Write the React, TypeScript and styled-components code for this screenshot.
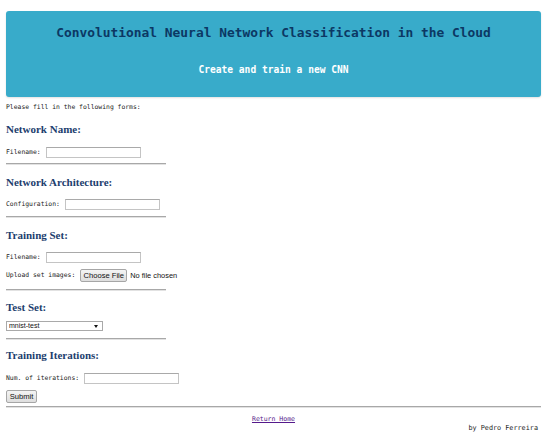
import React from "react";
import styled, { createGlobalStyle } from "styled-components";

const Global = createGlobalStyle`
  html, body { margin: 0; padding: 0; background: #fff; }
  body { padding: 0 9px 0 6px; font-family: "DejaVu Sans Mono", monospace; color: #222; }
`;

const Header = styled.header`
  margin-top: 11px;
  height: 86px;
  box-sizing: border-box;
  padding-top: 14px;
  background: #38abca;
  border-radius: 3px;
  box-shadow: 0 1px 2px rgba(0, 0, 0, 0.12);
  text-align: center;
`;

const Title = styled.h1`
  margin: 0;
  font-family: "DejaVu Sans Mono", monospace;
  font-size: 12.9px;
  line-height: 16px;
  font-weight: bold;
  color: #0c3864;
`;

const Subtitle = styled.h2`
  margin: 23px 0 0;
  font-family: "DejaVu Sans Mono", monospace;
  font-size: 9.6px;
  line-height: 12px;
  font-weight: bold;
  color: #fff;
`;

const Small = styled.p<{ $mt: number }>`
  margin: ${(p) => p.$mt}px 0 0;
  font-size: 6.4px;
  line-height: 10px;
`;

const Heading = styled.h3<{ $mt: number }>`
  margin: ${(p) => p.$mt}px 0 0;
  font-family: "Liberation Serif", serif;
  font-size: 11px;
  line-height: 14px;
  font-weight: bold;
  color: #1c3e6e;
`;

const Row = styled.div<{ $mt: number }>`
  margin-top: ${(p) => p.$mt}px;
  height: 14px;
  display: flex;
  align-items: center;
  font-size: 6.4px;
`;

const Label = styled.label`
  margin-right: 5px;
  white-space: pre;
`;

const TextInput = styled.input`
  box-sizing: border-box;
  width: 95px;
  height: 11px;
  padding: 0 2px;
  border: 1px solid #c4c4c4;
  border-top-color: #a9a9a9;
  font-size: 7px;
  outline: none;
`;

const GrayButton = styled.button<{ $w: number }>`
  box-sizing: border-box;
  width: ${(p) => p.$w}px;
  height: 13px;
  padding: 0;
  border: 1px solid #a6a6a6;
  border-radius: 2px;
  background: linear-gradient(#f4f4f4, #dedede);
  font-family: "Liberation Sans", Arial, sans-serif;
  font-size: 7.6px;
  color: #111;
  line-height: 11px;
`;

const FileName = styled.span`
  margin-left: 3px;
  font-family: "Liberation Sans", Arial, sans-serif;
  font-size: 7.4px;
  color: #111;
`;

const Rule = styled.hr<{ $mt: number; $full?: boolean }>`
  margin: ${(p) => p.$mt}px 0 0;
  width: ${(p) => (p.$full ? "535px" : "160px")};
  height: 0;
  border: none;
  border-top: 1px solid #a8a8a8;
  border-bottom: 1px solid #e2e2e2;
`;

const SelectWrap = styled.div<{ $mt: number }>`
  position: relative;
  margin-top: ${(p) => p.$mt}px;
  width: 97px;
  height: 12px;
  display: flex;
  align-items: center;
`;

const Select = styled.select`
  appearance: none;
  box-sizing: border-box;
  width: 97px;
  height: 10px;
  padding: 0 2px;
  border: 1px solid #a9a9a9;
  border-radius: 0;
  background: #fff;
  font-family: "Liberation Sans", Arial, sans-serif;
  font-size: 7px;
  line-height: 8px;
  color: #111;
  outline: none;
`;

const Arrow = styled.span`
  position: absolute;
  right: 5px;
  top: 5px;
  width: 0;
  height: 0;
  border-left: 2px solid transparent;
  border-right: 2px solid transparent;
  border-top: 3px solid #111;
  pointer-events: none;
`;

const Footer = styled.div`
  margin-top: 7px;
  width: 535px;
  font-size: 6.5px;
`;

const Center = styled.div`
  text-align: center;
  line-height: 8px;
`;

const HomeLink = styled.a`
  color: #551a8b;
  text-decoration: underline;
`;

const Credit = styled.div`
  margin-top: 1px;
  text-align: right;
  line-height: 8px;
  padding-right: 3px;
  font-size: 6.8px;
`;

const HiddenFile = styled.input`
  display: none;
`;

export default function App() {
  return (
    <>
      <Global />
      <Header>
        <Title>Convolutional Neural Network Classification in the Cloud</Title>
        <Subtitle>Create and train a new CNN</Subtitle>
      </Header>
      <Small $mt={5}>Please fill in the following forms:</Small>

      <Heading $mt={10}>Network Name:</Heading>
      <Row $mt={9}>
        <Label>Filename:</Label>
        <TextInput type="text" />
      </Row>
      <Rule $mt={4} />

      <Heading $mt={10}>Network Architecture:</Heading>
      <Row $mt={8}>
        <Label>Configuration:</Label>
        <TextInput type="text" />
      </Row>
      <Rule $mt={5} />

      <Heading $mt={10}>Training Set:</Heading>
      <Row $mt={8}>
        <Label>Filename:</Label>
        <TextInput type="text" />
      </Row>
      <Row $mt={4}>
        <Label>Upload set images:</Label>
        <GrayButton $w={47} type="button">Choose File</GrayButton>
        <HiddenFile type="file" />
        <FileName>No file chosen</FileName>
      </Row>
      <Rule $mt={7} />

      <Heading $mt={9}>Test Set:</Heading>
      <SelectWrap $mt={6}>
        <Select defaultValue="mnist-test">
          <option value="mnist-test">mnist-test</option>
        </Select>
        <Arrow />
      </SelectWrap>
      <Rule $mt={6} />

      <Heading $mt={8}>Training Iterations:</Heading>
      <Row $mt={9}>
        <Label>Num. of iterations:</Label>
        <TextInput type="text" />
      </Row>
      <Row $mt={4}>
        <GrayButton $w={31} type="submit">Submit</GrayButton>
      </Row>
      <Rule $mt={3} $full />

      <Footer>
        <Center>
          <HomeLink href="#">Return Home</HomeLink>
        </Center>
        <Credit>by Pedro Ferreira</Credit>
      </Footer>
    </>
  );
}
